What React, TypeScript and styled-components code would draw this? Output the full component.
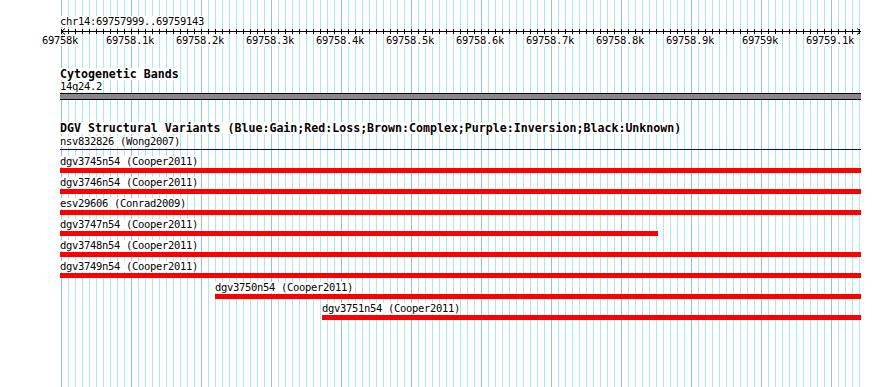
import React from "react";
import styled, { createGlobalStyle } from "styled-components";

const GlobalStyle = createGlobalStyle`
  html, body {
    margin: 0;
    padding: 0;
    background: #ffffff;
  }
  body {
    font-family: "DejaVu Sans Mono", "Liberation Mono", monospace;
    color: #000000;
  }
`;

const CHROM = "chr14";
const VIEW_START = 69757999;
const VIEW_END = 69759143;
const ORIGIN = 69758000;
const PX_PER_BP = 0.7;
const TRACK_WIDTH = 801;

const toPx = (bp: number) =>
  Math.max(0, Math.min(TRACK_WIDTH, Math.round((bp - ORIGIN) * PX_PER_BP) + 1));

type Variant = { name: string; study: string; start: number; end: number };

const variants: Variant[] = [
  { name: "dgv3745n54", study: "Cooper2011", start: VIEW_START, end: VIEW_END },
  { name: "dgv3746n54", study: "Cooper2011", start: VIEW_START, end: VIEW_END },
  { name: "esv29606", study: "Conrad2009", start: VIEW_START, end: VIEW_END },
  { name: "dgv3747n54", study: "Cooper2011", start: VIEW_START, end: 69758853 },
  { name: "dgv3748n54", study: "Cooper2011", start: VIEW_START, end: VIEW_END },
  { name: "dgv3749n54", study: "Cooper2011", start: VIEW_START, end: VIEW_END },
  { name: "dgv3750n54", study: "Cooper2011", start: 69758220, end: VIEW_END },
  { name: "dgv3751n54", study: "Cooper2011", start: 69758373, end: VIEW_END },
];

const tickLabels = [
  "69758k",
  "69758.1k",
  "69758.2k",
  "69758.3k",
  "69758.4k",
  "69758.5k",
  "69758.6k",
  "69758.7k",
  "69758.8k",
  "69758.9k",
  "69759k",
  "69759.1k",
];

const Page = styled.main`
  box-sizing: border-box;
  width: 890px;
  height: 387px;
  overflow: hidden;
  padding: 16px 0 0 60px;
  background:
    linear-gradient(#ffffff, #ffffff) 0 0 / 61px 100% no-repeat,
    linear-gradient(#ffffff, #ffffff) 860px 0 / 30px 100% no-repeat,
    linear-gradient(to right, #87c3f0 1px, transparent 1px) 61px 0 / 70px 100% repeat-x,
    linear-gradient(to right, #aaeaee 1px, transparent 1px) 61px 0 / 7px 100% repeat-x,
    #ffffff;
`;

const Track = styled.section<{ $gap: number }>`
  width: ${TRACK_WIDTH}px;
  margin-top: ${(p) => p.$gap}px;
  display: flex;
  flex-direction: column;
`;

const TextChip = styled.div`
  width: fit-content;
  height: 11px;
  font-size: 10.5px;
  letter-spacing: -0.32px;
  line-height: 11px;
  white-space: nowrap;
  background: #ffffff;
`;

const PositionLabel = styled(TextChip)``;

const TrackTitle = styled.h2`
  margin: 0;
  width: fit-content;
  height: 12px;
  font-size: 11.6px;
  font-weight: bold;
  line-height: 12px;
  white-space: nowrap;
  background: #ffffff;
`;

const SubLabel = styled(TextChip)<{ $gap: number }>`
  margin-top: ${(p) => p.$gap}px;
`;

const Axis = styled.svg`
  display: block;
  width: 802px;
  height: 8px;
  overflow: visible;
`;

const TickRow = styled.div`
  display: flex;
  margin-left: -35px;
  height: 11px;
`;

const TickCell = styled.div`
  flex: 0 0 70px;
  display: flex;
  justify-content: center;
`;

const TickText = styled.span`
  font-size: 10.5px;
  letter-spacing: -0.32px;
  line-height: 11px;
  height: 11px;
  white-space: nowrap;
  background: #ffffff;
`;

const Band = styled.div`
  box-sizing: border-box;
  margin-top: 1px;
  width: ${TRACK_WIDTH}px;
  height: 7px;
  border-top: 1px solid #000000;
  border-bottom: 1px solid #000000;
  background: #888888;
`;

const GainLine = styled.div`
  margin-top: 2px;
  width: ${TRACK_WIDTH}px;
  height: 1px;
  background: #0000c8;
`;

const Rows = styled.div`
  margin-top: 6px;
  display: flex;
  flex-direction: column;
  gap: 4px;
`;

const Row = styled.div`
  display: flex;
  flex-direction: column;
`;

const Bar = styled.div`
  margin-top: 1px;
  height: 5px;
  background: #ff0000;
`;

const Ruler: React.FC = () => {
  const ticks = Array.from({ length: 115 }, (_, i) => 1 + 7 * i + 0.5);
  return (
    <Track $gap={0}>
      <PositionLabel>
        {CHROM}:{VIEW_START}..{VIEW_END}
      </PositionLabel>
      <Axis viewBox="0 0 802 8">
        <line x1={1} y1={4.5} x2={801} y2={4.5} stroke="#000" strokeWidth={1} shapeRendering="crispEdges" />
        {ticks.map((x) => (
          <line key={x} x1={x} y1={2} x2={x} y2={7} stroke="#000" strokeWidth={1} shapeRendering="crispEdges" />
        ))}
        <polyline points="5,1.5 1.5,4.5 5,7.5" fill="none" stroke="#000" strokeWidth={1} />
        <polyline points="797,1.5 800.5,4.5 797,7.5" fill="none" stroke="#000" strokeWidth={1} />
      </Axis>
      <TickRow>
        {tickLabels.map((t) => (
          <TickCell key={t}>
            <TickText>{t}</TickText>
          </TickCell>
        ))}
      </TickRow>
    </Track>
  );
};

export default function App() {
  return (
    <>
      <GlobalStyle />
      <Page>
        <Ruler />
        <Track $gap={22}>
          <TrackTitle>Cytogenetic Bands</TrackTitle>
          <SubLabel $gap={1}>14q24.2</SubLabel>
          <Band />
        </Track>
        <Track $gap={22}>
          <TrackTitle>
            DGV Structural Variants (Blue:Gain;Red:Loss;Brown:Complex;Purple:Inversion;Black:Unknown)
          </TrackTitle>
          <SubLabel $gap={2}>nsv832826 (Wong2007)</SubLabel>
          <GainLine />
          <Rows>
            {variants.map((v) => {
              const left = toPx(v.start);
              const right = toPx(v.end);
              return (
                <Row key={v.name} style={{ paddingLeft: left }}>
                  <TextChip>
                    {v.name} ({v.study})
                  </TextChip>
                  <Bar style={{ width: right - left }} />
                </Row>
              );
            })}
          </Rows>
        </Track>
      </Page>
    </>
  );
}
